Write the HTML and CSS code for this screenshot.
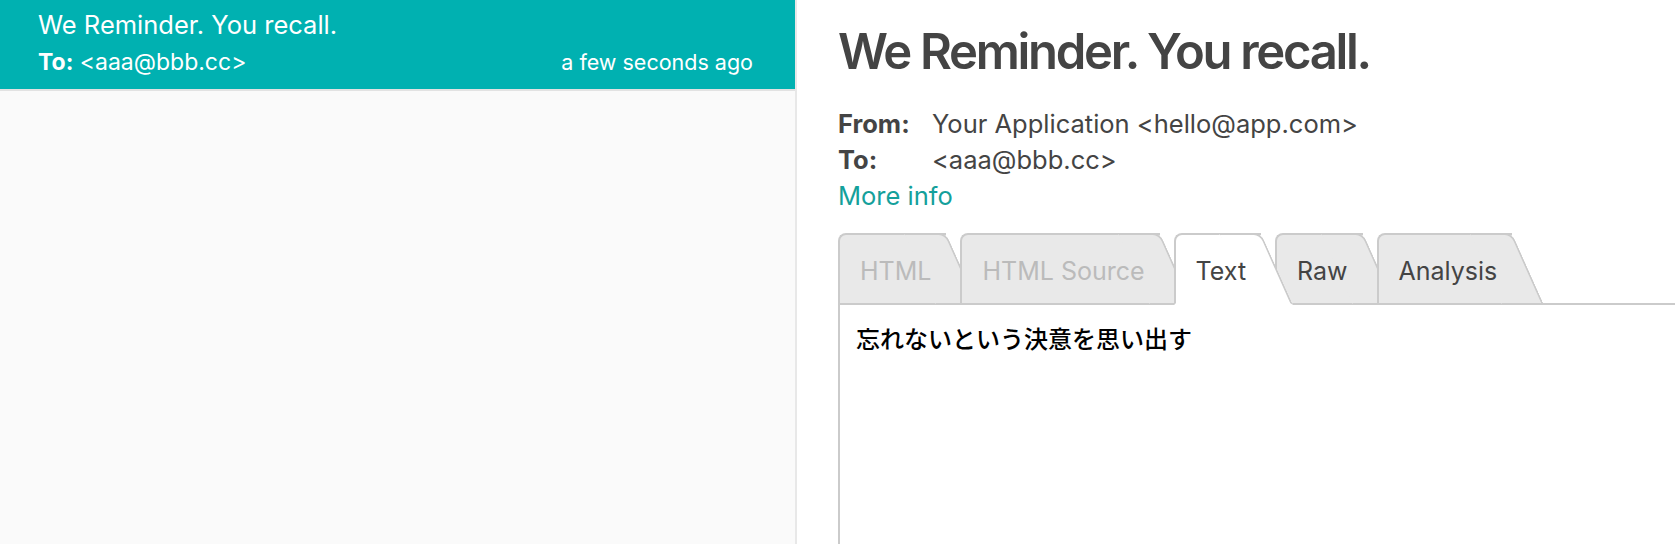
FILE: index.html
```html
<!DOCTYPE html>
<html lang="en">
<head>
<meta charset="utf-8">
<title>MailCatcher</title>
<link rel="stylesheet" href="styles.css">
</head>
<body>
<div class="app">
  <aside class="sidebar">
    <div class="item selected">
      <div class="item-subject">We Reminder. You recall.</div>
      <div class="item-meta">
        <span class="item-to"><b>To:</b> &lt;aaa@bbb.cc&gt;</span>
        <span class="item-time">a few seconds ago</span>
      </div>
    </div>
  </aside>
  <main class="message">
    <h1 class="subject">We Reminder. You recall.</h1>
    <dl class="headers">
      <dt>From:</dt><dd>Your Application &lt;hello@app.com&gt;</dd>
      <dt>To:</dt><dd>&lt;aaa@bbb.cc&gt;</dd>
    </dl>
    <a class="more" href="#">More info</a>
    <nav class="tabs">
      <span class="tab disabled t1">HTML</span>
      <span class="tab disabled t2">HTML Source</span>
      <span class="tab active t3">Text</span>
      <span class="tab t4">Raw</span>
      <span class="tab t5">Analysis</span>
      <span class="tab-fill"></span>
    </nav>
    <div class="body">
      <p class="body-text">忘れないという決意を思い出す</p>
    </div>
  </main>
</div>
</body>
</html>
```
FILE: styles.css
```css
html, body {
  margin: 0;
  padding: 0;
  height: 100%;
  overflow: hidden;
}
body {
  font-family: Inter, "Noto Sans", sans-serif;
  color: #444;
  background: #fff;
}
.app {
  display: flex;
  height: 544px;
}
.sidebar {
  width: 795px;
  flex: none;
  background: #fafafa;
  border-right: 2px solid #e8e8e8;
}
.item {
  height: 79px;
  padding: 10px 42px 0 38px;
  border-bottom: 2px solid #e2e2e2;
}
.item.selected {
  background: #00b1b1;
  color: #fff;
}
.item-subject {
  font-size: 25.5px;
  line-height: 30px;
}
.item-meta {
  display: flex;
  justify-content: space-between;
  align-items: baseline;
  margin-top: 8px;
  line-height: 28px;
}
.item-to {
  font-size: 23px;
}
.item-to b {
  font-weight: 700;
}
.item-time {
  font-size: 21.5px;
}
.message {
  flex: 1;
  min-width: 0;
  padding: 0 0 0 41px;
}
.subject {
  margin: 0;
  padding-top: 22px;
  font-size: 49px;
  line-height: 60px;
  font-weight: 600;
  letter-spacing: -2.3px;
  color: #444;
}
.headers {
  display: grid;
  grid-template-columns: 94px auto;
  margin: 0;
  padding-top: 24px;
  font-size: 25.5px;
  line-height: 36px;
}
.headers dt {
  font-weight: 700;
}
.headers dd {
  margin: 0;
}
.more {
  display: block;
  font-size: 25.5px;
  line-height: 36px;
  color: #14a09b;
  text-decoration: none;
}
.tabs {
  display: flex;
  margin-top: 19px;
  height: 72px;
}
.tab {
  position: relative;
  display: flex;
  align-items: center;
  box-sizing: border-box;
  height: 72px;
  padding: 4px 15px 0 20px;
  margin-right: 14px;
  font-size: 25px;
  background: #e9e9e9;
  border: 2px solid #cbcbcb;
  border-right: none;
  border-top-left-radius: 8px;
  color: #444;
}
.tab::after {
  content: "";
  position: absolute;
  z-index: -1;
  top: -2px;
  bottom: -2px;
  right: 0;
  width: 40px;
  background: #e9e9e9;
  border-top: 2px solid #cbcbcb;
  border-right: 2px solid #cbcbcb;
  border-bottom: 2px solid #cbcbcb;
  border-top-right-radius: 8px;
  transform: skewX(24deg);
  transform-origin: 0 0;
}
.tab.disabled { color: #bbb; }
.tab.t1 { z-index: 1; }
.tab.t2 { z-index: 2; }
.tab.t3 { z-index: 10; }
.tab.t4 { z-index: 4; }
.tab.t5 { z-index: 5; }
.tab.active {
  background: #fff;
  border-bottom-color: #fff;
}
.tab.active::after {
  background: #fff;
  border-bottom-color: #fff;
}
.tab-fill {
  flex: 1;
  margin-left: -14px;
  border-bottom: 2px solid #cbcbcb;
}
.body {
  border-left: 2px solid #cbcbcb;
  height: 300px;
  padding: 17px 0 0 16px;
}
.body-text {
  margin: 0;
  font-family: "Noto Sans CJK JP", sans-serif;
  font-size: 24px;
  font-weight: 500;
  color: #000;
  line-height: 32px;
}
```
